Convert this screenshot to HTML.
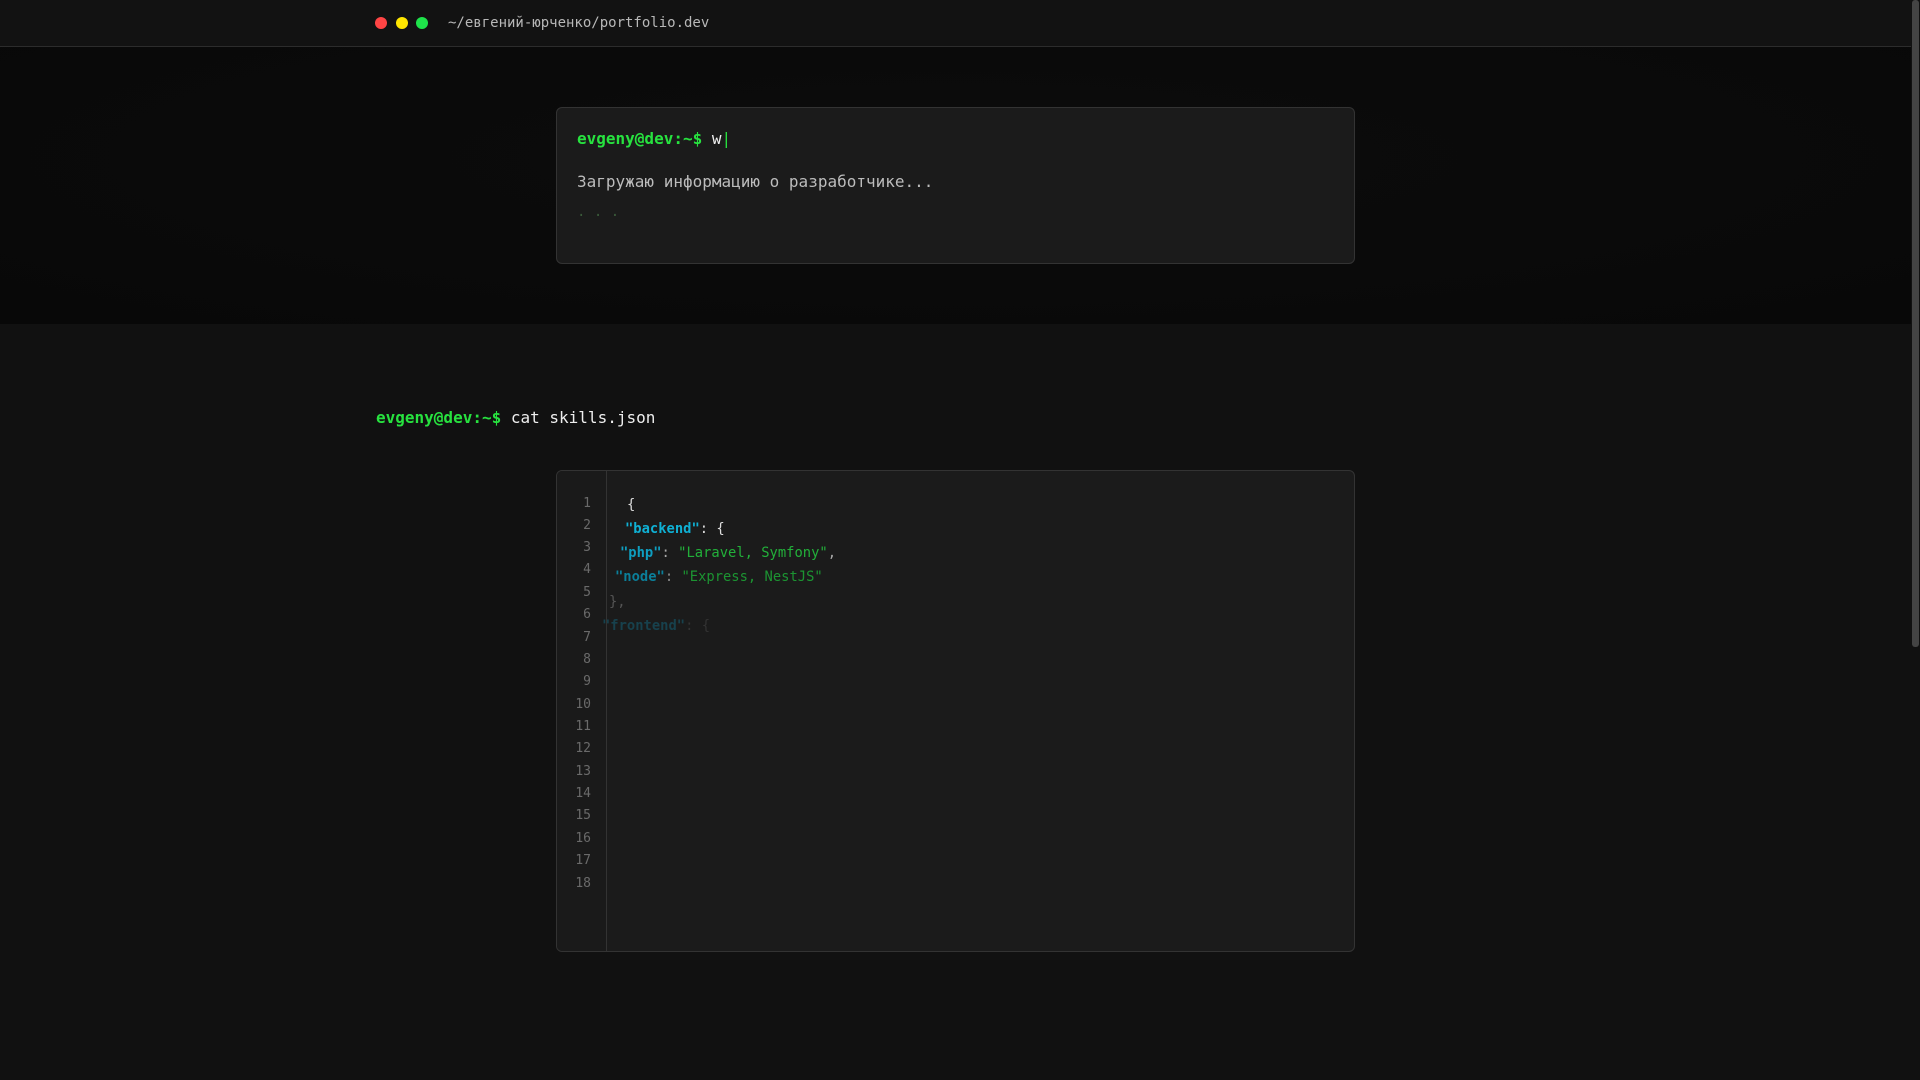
<!DOCTYPE html>
<html><head><meta charset="utf-8"><style>
*{margin:0;padding:0;box-sizing:border-box}
body{width:1920px;height:1080px;background:#111;overflow:hidden;font-family:"DejaVu Sans Mono","Liberation Mono",monospace;position:relative}
.top{position:absolute;left:0;top:0;width:1911px;height:47px;background:#121212;border-bottom:1px solid #2c2c2c}
.dot{position:absolute;top:17px;width:12px;height:12px;border-radius:50%}
.path{position:absolute;left:448px;top:15px;font-size:14px;color:#b8b8b8}
.hero{position:absolute;left:0;top:47px;width:1911px;height:277px;background:radial-gradient(ellipse at 50% 40%,#0c0c0c,#080808)}
.card{position:absolute;left:556px;width:799px;background:#1b1b1b;border:1px solid #333;border-radius:6px}
.g{color:#27e23f;font-weight:bold}
.a{position:absolute;white-space:pre}
.sb{position:absolute;right:0;top:0;width:9px;height:1080px;background:#111}
.sb i{position:absolute;left:1px;top:0;width:7px;height:647px;background:#444;border-radius:3px}
.ln{position:absolute;right:16px;font-size:13px;color:#6a6a6a}
.k{color:#0fb0d4;font-weight:bold}
.s{color:#22b03a}
</style></head><body>
<div class="top">
<div class="dot" style="left:375px;background:#ff4545"></div>
<div class="dot" style="left:396px;background:#ffe600"></div>
<div class="dot" style="left:416px;background:#1ee34a"></div>
<div class="path">~/евгений-юрченко/portfolio.dev</div>
</div>
<div class="hero">
<div class="card" style="top:60px;height:157px;">
<div class="a" style="left:20px;top:21px;font-size:16px;color:#eee"><span class="g">evgeny@dev:~$</span> w<span style="color:#27e23f">|</span></div>
<div class="a" style="left:20px;top:64px;font-size:16px;color:#bcbcbc">Загружаю информацию о разработчике...</div>
<div class="a" style="left:20px;top:96px;font-size:14px;color:#3a5a3a">. . .</div>
</div>
</div>
<div class="a" style="left:376px;top:408px;font-size:16px;color:#eee"><span class="g">evgeny@dev:~$</span> cat skills.json</div>
<div class="card" style="top:470px;height:482px;overflow:hidden">
<div style="position:absolute;left:0;top:0;width:50px;height:100%;border-right:1px solid #333;background:#1a1a1a"></div>
<div style="position:absolute;left:0;top:25px;width:50px">
<div class="ln" style="top:0">1</div><div class="ln" style="top:22px">2</div><div class="ln" style="top:44px">3</div><div class="ln" style="top:66px">4</div><div class="ln" style="top:89px">5</div><div class="ln" style="top:111px">6</div><div class="ln" style="top:134px">7</div><div class="ln" style="top:156px">8</div><div class="ln" style="top:178px">9</div><div class="ln" style="top:201px">10</div><div class="ln" style="top:223px">11</div><div class="ln" style="top:245px">12</div><div class="ln" style="top:268px">13</div><div class="ln" style="top:290px">14</div><div class="ln" style="top:312px">15</div><div class="ln" style="top:335px">16</div><div class="ln" style="top:357px">17</div><div class="ln" style="top:380px">18</div>
</div>
<div class="a" style="left:70px;top:26px;font-size:13.8px;color:#ddd">{</div>
<div class="a" style="left:68px;top:50px;font-size:13.8px;color:#ddd"><span class="k">"backend"</span>: {</div>
<div class="a" style="left:63px;top:74px;font-size:13.8px;color:#aaa"><span class="k" style="color:#0e9ec0">"php"</span>: <span class="s">"Laravel, Symfony"</span>,</div>
<div class="a" style="left:58px;top:98px;font-size:13.8px;color:#888"><span class="k" style="color:#0b7f9a">"node"</span>: <span class="s" style="color:#1c9432">"Express, NestJS"</span></div>
<div class="a" style="left:52px;top:123px;font-size:13.8px;color:#555">},</div>
<div class="a" style="left:45px;top:147px;font-size:13.8px;color:#333"><span style="color:#17414d;font-weight:bold">"frontend"</span>: {</div>
</div>
<div class="sb"><i></i></div>
</body></html>
